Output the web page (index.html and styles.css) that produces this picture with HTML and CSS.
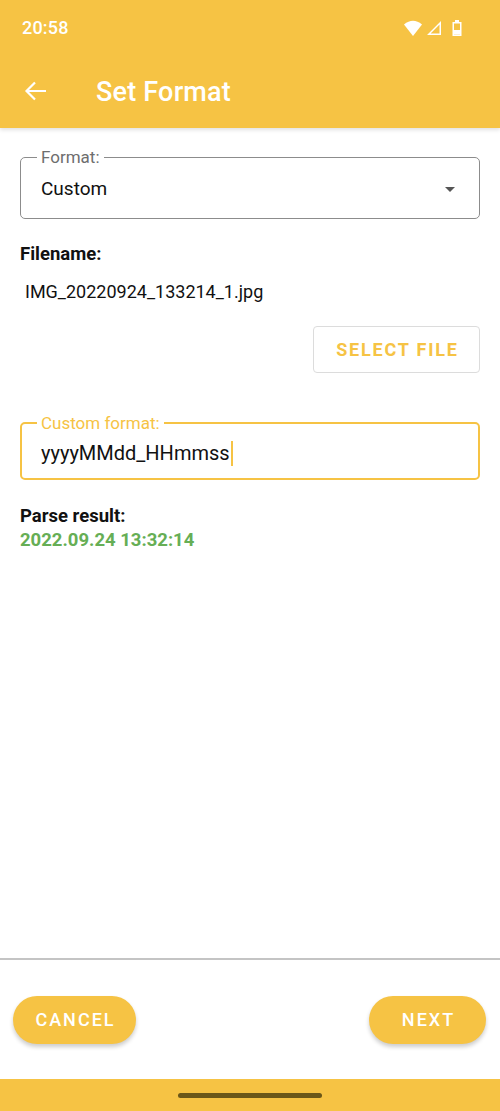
FILE: index.html
```html
<!DOCTYPE html>
<html lang="en">
<head>
    <meta charset="UTF-8">
    <meta name="viewport" content="width=device-width, initial-scale=1.0">
    <title>Set Format</title>
    <link rel="stylesheet" href="styles.css">
</head>
<body>
    <header class="app-header">
        <div class="status-bar">
            <span class="clock">20:58</span>
            <div class="status-icons">
                <!-- wifi -->
                <svg width="18" height="16" viewBox="0 0 18 16"><path d="M0 4.5 Q9 -3 18 4.5 L9 16 Z" fill="#fff"/></svg>
                <!-- signal -->
                <svg width="16" height="16" viewBox="0 0 16 16"><path d="M15 1 V15 H1 Z M13.5 4.6 L4.6 13.5 H13.5 Z" fill="#fff" fill-rule="evenodd"/></svg>
                <!-- battery -->
                <svg width="10" height="16" viewBox="0 0 10 16"><path d="M3 0 H7 V2 H9.5 V16 H0.5 V2 H3 Z M2 3.5 V14.5 H8 V3.5 Z" fill="#fff" fill-rule="evenodd"/><rect x="2" y="10" width="6" height="4.5" fill="#fff"/></svg>
            </div>
        </div>
        <div class="toolbar">
            <svg class="back" width="24" height="24" viewBox="0 0 24 24"><path d="M22 12 H3 M11 3.5 L2.5 12 L11 20.5" fill="none" stroke="#fff" stroke-width="2.2"/></svg>
            <h1>Set Format</h1>
        </div>
    </header>

    <main class="content">
        <fieldset class="field">
            <legend>Format:</legend>
            <div class="field-value">
                <span>Custom</span>
                <span class="caret"></span>
            </div>
        </fieldset>

        <h2 class="label">Filename:</h2>
        <p class="filename">IMG_20220924_133214_1.jpg</p>

        <div class="actions">
            <button class="outline-btn">SELECT FILE</button>
        </div>

        <fieldset class="field field-active">
            <legend>Custom format:</legend>
            <div class="field-value">
                <span>yyyyMMdd_HHmmss<span class="cursor"></span></span>
            </div>
        </fieldset>

        <h2 class="label label-result">Parse result:</h2>
        <p class="result">2022.09.24 13:32:14</p>
    </main>

    <footer class="bottom">
        <div class="buttons">
            <button class="pill cancel">CANCEL</button>
            <button class="pill next">NEXT</button>
        </div>
        <div class="nav-bar"><span class="handle"></span></div>
    </footer>
</body>
</html>
```

FILE: styles.css
```css
body {
    font-family: Roboto, "Liberation Sans", sans-serif;
    margin: 0;
    width: 500px;
    height: 1111px;
    display: flex;
    flex-direction: column;
    background-color: #fff;
    color: #111;
}

.app-header {
    background-color: #f6c344;
    color: #fff;
    box-shadow: 0 2px 4px rgba(0, 0, 0, 0.12);
    position: relative;
    z-index: 1;
}

.status-bar {
    height: 52px;
    display: flex;
    align-items: center;
    justify-content: space-between;
    padding: 0 38px 0 22px;
}

.clock {
    font-size: 18px;
    font-weight: 500;
    letter-spacing: 0.2px;
    margin-top: 2px;
}

.status-icons {
    display: flex;
    align-items: center;
    gap: 4px;
    margin-top: 3px;
}

.status-icons svg:last-child {
    margin-left: 6px;
}

.toolbar {
    height: 76px;
    display: flex;
    align-items: center;
    padding-left: 24px;
}

.toolbar .back {
    margin-top: 2px;
}

.toolbar h1 {
    margin: 4px 0 0 48px;
    font-size: 27px;
    font-weight: 500;
    letter-spacing: 0.2px;
}

.content {
    flex: 1;
    padding: 19px 20px 0;
}

.field {
    margin: 0;
    padding: 0 24px 0 20px;
    border: 1px solid #8c8c8c;
    border-radius: 5px;
    height: 72px;
    box-sizing: border-box;
}

.field legend {
    font-size: 17px;
    line-height: 20px;
    color: #6e6e6e;
    padding: 0 4px;
    margin-left: -4px;
}

.field-value {
    display: flex;
    align-items: center;
    justify-content: space-between;
    font-size: 19px;
    line-height: 24px;
    margin-top: 10px;
}

.caret {
    width: 0;
    height: 0;
    border-left: 5px solid transparent;
    border-right: 5px solid transparent;
    border-top: 5px solid #555;
}

.field-active {
    border: 2px solid #f6c344;
    margin-top: 40px;
    padding-left: 19px;
    height: 67px;
}

.field-active legend {
    color: #f6c344;
}

.field-active .field-value {
    font-size: 20px;
    margin-top: 8px;
}

.cursor {
    display: inline-block;
    width: 2px;
    height: 25px;
    background-color: #f6c344;
    vertical-align: -6px;
    margin-left: 1px;
}

.label {
    font-size: 18.5px;
    font-weight: 700;
    margin: 24px 0 0;
    line-height: 22px;
}

.filename {
    font-size: 18px;
    margin: 16px 0 0 5px;
    line-height: 22px;
}

.actions {
    display: flex;
    justify-content: flex-end;
    margin-top: 23px;
}

.outline-btn {
    font-family: inherit;
    width: 167px;
    height: 47px;
    background-color: #fff;
    border: 1px solid #dcdcdc;
    border-radius: 4px;
    color: #f6c344;
    font-size: 18px;
    font-weight: 700;
    letter-spacing: 1.8px;
    padding: 0 0 0 2px;
}

.label-result {
    margin-top: 25px;
}

.result {
    margin: 2px 0 0;
    font-size: 18.5px;
    line-height: 22px;
    font-weight: 700;
    color: #66ae55;
}

.bottom {
    border-top: 2px solid #c4c4c4;
}

.buttons {
    height: 119px;
    display: flex;
    justify-content: space-between;
    align-items: center;
    padding: 0 14px 0 13px;
}

.pill {
    font-family: inherit;
    height: 48px;
    border: none;
    border-radius: 24px;
    background-color: #f6c344;
    color: #fff;
    font-size: 18px;
    font-weight: 500;
    letter-spacing: 2px;
    box-shadow: 0 3px 4px rgba(0, 0, 0, 0.2);
}

.cancel {
    width: 123px;
    padding: 0 0 0 2px;
}

.next {
    width: 117px;
    padding: 0 0 0 2px;
}

.nav-bar {
    height: 32px;
    background-color: #f6c344;
    display: flex;
    justify-content: center;
    align-items: center;
}

.handle {
    width: 144px;
    height: 5px;
    border-radius: 3px;
    background-color: #6b5718;
    margin-top: 1px;
}
```
